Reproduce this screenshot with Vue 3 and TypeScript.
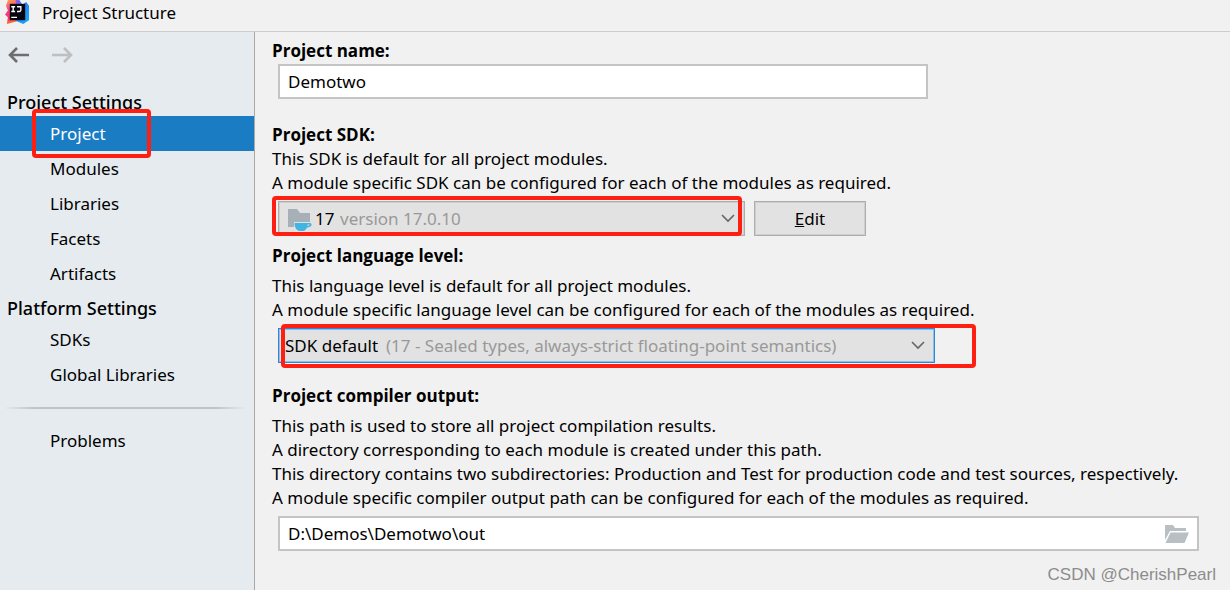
<script setup lang="ts">
import { ref } from 'vue'

const projectItems = ['Project', 'Modules', 'Libraries', 'Facets', 'Artifacts']
const platformItems = ['SDKs', 'Global Libraries']
const active = ref('Project')
const projectName = ref('Demotwo')
const outputPath = ref('D:\\Demos\\Demotwo\\out')
const sdk = ref('17')
const level = ref('SDK default')
</script>

<template>
  <div class="window">
    <header class="titlebar">
      <svg class="logo" viewBox="0 0 26 26" aria-hidden="true">
        <defs>
          <linearGradient id="warm" x1="0" y1="0" x2="0.3" y2="1">
            <stop offset="0" stop-color="#fdb03a" />
            <stop offset="0.4" stop-color="#f4478f" />
            <stop offset="0.75" stop-color="#f5315f" />
            <stop offset="1" stop-color="#ff7a2a" />
          </linearGradient>
          <linearGradient id="cool" x1="0" y1="0" x2="1" y2="1">
            <stop offset="0" stop-color="#a557d8" />
            <stop offset="0.4" stop-color="#2a7df0" />
            <stop offset="1" stop-color="#13b4f5" />
          </linearGradient>
        </defs>
        <path d="M3 0h10l6 6-3 15-6 2-8 2 1-7-3-3 3-4-2-5z" fill="url(#warm)" />
        <path d="M11 0h4l3 5 4-3 3 4v15l-6 4-9-4 4-2z" fill="url(#cool)" />
        <rect x="5" y="4" width="16" height="17" fill="#090611" />
        <path d="M6.500 7h4M8.500 7v5M6.500 12h4M12.500 7h4v3.500q0 1.500-1.500 1.500h-2.500M6.500 18h6" fill="none" stroke="#fff" stroke-width="1.400" />
      </svg>
      <span>Project Structure</span>
    </header>

    <div class="body">
      <nav class="sidebar">
        <div class="history">
          <button type="button" class="arrow" aria-label="Back">
            <svg viewBox="0 0 22 16"><path d="M21 8H2M9 1L2 8l7 7" fill="none" stroke="#6e6e6e" stroke-width="2.600" /></svg>
          </button>
          <button type="button" class="arrow" aria-label="Forward" disabled>
            <svg viewBox="0 0 22 16"><path d="M1 8h19M13 1l7 7-7 7" fill="none" stroke="#bdbfc0" stroke-width="2.600" /></svg>
          </button>
        </div>
        <h2>Project Settings</h2>
        <button
          v-for="item in projectItems"
          :key="item"
          type="button"
          class="item"
          :class="{ active: active === item }"
          @click="active = item"
        >
          {{ item }}
          <span v-if="item === 'Project'" class="mark mark-item"></span>
        </button>
        <h2>Platform Settings</h2>
        <button
          v-for="item in platformItems"
          :key="item"
          type="button"
          class="item"
          :class="{ active: active === item }"
          @click="active = item"
        >
          {{ item }}
        </button>
        <div class="separator"></div>
        <button type="button" class="item" :class="{ active: active === 'Problems' }" @click="active = 'Problems'">Problems</button>
      </nav>

      <main class="content">
        <section class="group name-group">
          <label class="title" for="name">Project name:</label>
          <input id="name" v-model="projectName" class="field name" type="text" />
        </section>

        <section class="group sdk-group">
          <label class="title" for="sdk">Project SDK:</label>
          <p>This SDK is default for all project modules.</p>
          <p>A module specific SDK can be configured for each of the modules as required.</p>
          <div class="row">
            <div class="combo sdk">
              <select id="sdk" v-model="sdk" aria-describedby="sdk-version">
                <option>17</option>
              </select>
              <svg class="sdk-icon" viewBox="0 0 24 22" aria-hidden="true">
                <path d="M0 0h9l3 4h10v14H0z" fill="#a7b0b6" />
                <path d="M6 13h18v5h-3l-3 4H9l-3-4z" fill="#e2e2e2" />
                <path d="M6.500 14h15.500c2.500 0 2.500 4.500-3 4.500-1 2.500-2.500 3.500-4 3.500h-3c-3.500 0-5.500-4-5.500-8z" fill="#41b5e2" />
                <path d="M19.500 15.500h2q.5 1.300-2 1.300z" fill="#e2e2e2" />
              </svg>
              <span id="sdk-version" class="hint">version 17.0.10</span>
              <svg class="chevron" viewBox="0 0 14 9" aria-hidden="true"><path d="M1 1l6 6 6-6" /></svg>
              <span class="mark mark-sdk"></span>
            </div>
            <button type="button" class="edit"><u>E</u>dit</button>
          </div>
        </section>

        <section class="group level-group">
          <label class="title spaced" for="level">Project language level:</label>
          <p>This language level is default for all project modules.</p>
          <p>A module specific language level can be configured for each of the modules as required.</p>
          <div class="combo level">
            <select id="level" v-model="level" aria-describedby="level-info">
              <option>SDK default</option>
            </select>
            <span id="level-info" class="hint">(17 - Sealed types, always-strict floating-point semantics)</span>
            <svg class="chevron" viewBox="0 0 14 9" aria-hidden="true"><path d="M1 1l6 6 6-6" /></svg>
            <span class="mark mark-level"></span>
          </div>
        </section>

        <section class="group">
          <label class="title spaced" for="output">Project compiler output:</label>
          <p>This path is used to store all project compilation results.</p>
          <p>A directory corresponding to each module is created under this path.</p>
          <p>This directory contains two subdirectories: Production and Test for production code and test sources, respectively.</p>
          <p>A module specific compiler output path can be configured for each of the modules as required.</p>
          <div class="field path">
            <input id="output" v-model="outputPath" type="text" />
            <button type="button" class="browse" aria-label="Browse">
              <svg viewBox="0 0 24 18">
                <path d="M0 0h8l2 3h11v3H5L0 15z" fill="#b9c0c4" />
                <path d="M5.500 7.500H24L19.500 18H0.500z" fill="#b9c0c4" />
              </svg>
            </button>
          </div>
        </section>
        <div class="watermark">CSDN @CherishPearl</div>
      </main>
    </div>
  </div>
</template>

<style>
body {
  margin: 0;
  background: #f1f1f1;
}
</style>

<style scoped>
* {
  box-sizing: border-box;
}
.window {
  display: flex;
  flex-direction: column;
  min-height: 100vh;
  overflow: hidden;
  background: #f1f1f1;
  color: #000;
  font-family: "Noto Sans", "Open Sans", sans-serif;
  font-size: 17px;
  line-height: 24px;
}
button,
input,
select {
  font: inherit;
  color: inherit;
}
.titlebar {
  display: flex;
  align-items: center;
  gap: 12px;
  height: 32px;
  padding: 0 5px 6px;
  border-bottom: 1px solid #cdcdcd;
}
.logo {
  width: 25px;
  height: 25px;
}
.body {
  display: flex;
  flex: 1;
}
.sidebar {
  display: flex;
  flex-direction: column;
  flex: 0 0 255px;
  background: #e5ebef;
  border-right: 1px solid #a9a9a9;
}
.history {
  display: flex;
  gap: 21px;
  height: 53px;
  padding: 15px 8px 0;
}
.arrow {
  width: 22px;
  height: 16px;
  padding: 0;
  border: 0;
  background: none;
}
.arrow svg {
  display: block;
}
h2 {
  height: 31px;
  margin: 0;
  padding: 5px 7px 0;
  font-size: 18px;
  font-weight: 500;
}
.item {
  position: relative;
  height: 35px;
  padding: 0 0 0 50px;
  border: 0;
  background: none;
  text-align: left;
}
.item.active {
  background: #1a7dc4;
  color: #fff;
}
.separator {
  height: 2px;
  margin: 15px 8px 14px 4px;
  background: linear-gradient(90deg, transparent, #bfc4c7 12%, #bfc4c7 88%, transparent);
}
.content {
  flex: 1;
  min-width: 0;
  padding: 7px 14px 0 17px;
}
.group {
  margin-right: 17px;
}
.title {
  display: block;
  font-family: "Open Sans", "Noto Sans", sans-serif;
  font-weight: 700;
}
.title.spaced {
  margin-bottom: 6px;
}
p {
  margin: 0;
  white-space: nowrap;
}
.field {
  display: flex;
  height: 35px;
  margin-left: 6px;
  border: 2px solid #c4c4c4;
  background: #fff;
}
.name {
  width: 650px;
  max-width: 100%;
  margin-top: 1px;
  padding: 0 8px;
}
.sdk-group {
  margin-top: 24px;
}
.row {
  display: flex;
  gap: 9px;
  margin: 6px 0 0 6px;
}
.combo {
  position: relative;
  display: flex;
  align-items: center;
  height: 35px;
  max-width: 100%;
  border: 1px solid #adadad;
  box-shadow: inset 0 0 0 1px #cfcfcf;
  background: #e2e2e2;
}
.combo select {
  position: absolute;
  inset: 0;
  width: 100%;
  border: 0;
  background: none;
  appearance: none;
}
.sdk {
  width: 467px;
}
.sdk select {
  padding: 0 0 0 36px;
}
.sdk-icon {
  position: relative;
  width: 24px;
  height: 22px;
  margin: 3px 0 0 9px;
  pointer-events: none;
}
.hint {
  position: relative;
  color: #999;
  white-space: nowrap;
  pointer-events: none;
}
.sdk .hint {
  margin-left: 28px;
}
.chevron {
  position: relative;
  width: 14px;
  height: 9px;
  margin: 0 9px 0 auto;
  pointer-events: none;
}
.chevron path {
  fill: none;
  stroke: #666;
  stroke-width: 1.6;
}
.edit {
  width: 112px;
  padding: 0;
  border: 1px solid #adadad;
  box-shadow: inset 0 0 0 1px #cfcfcf;
  background: #e2e2e2;
}
.level-group {
  margin: 8px 17px 21px 0;
}
.level {
  width: 657px;
  margin: 6px 0 0 6px;
  border-color: #2a8ad8;
  box-shadow: inset 0 0 0 1px #8fbfe4;
}
.level select {
  padding: 0 0 0 6px;
}
.level .hint {
  margin-left: 107px;
}
.path {
  align-items: center;
  margin-top: 6px;
  padding: 0 8px;
}
.path input {
  flex: 1;
  min-width: 0;
  padding: 0;
  border: 0;
  background: none;
}
.browse {
  width: 24px;
  height: 18px;
  padding: 0;
  border: 0;
  background: none;
}
.browse svg {
  display: block;
}
.watermark {
  margin-top: 12px;
  font-family: "Liberation Sans", Arial, sans-serif;
  color: #8c8c8c;
  text-align: right;
}
.mark {
  position: absolute;
  border: 4px solid #ff1f12;
  border-radius: 4px;
  pointer-events: none;
}
.mark-item {
  inset: -7px 103px -7px 32px;
}
.mark-sdk {
  inset: -6px 2px -1px -7px;
}
.mark-level {
  inset: -5px -42px -6px 2px;
}
</style>
